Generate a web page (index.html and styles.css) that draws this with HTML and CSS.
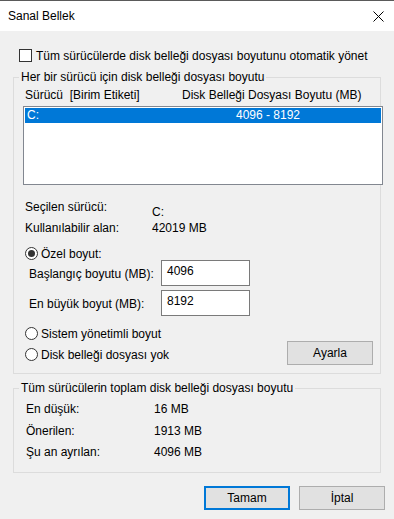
FILE: index.html
```html
<!DOCTYPE html>
<html lang="tr">
<head>
    <meta charset="UTF-8">
    <title>Sanal Bellek</title>
    <link rel="stylesheet" href="styles.css">
</head>
<body>
    <div class="titlebar">
        <span class="title">Sanal Bellek</span>
        <svg class="close" width="11" height="11" viewBox="0 0 11 11">
            <path d="M0.5 0.5 L10.5 10.5 M10.5 0.5 L0.5 10.5" stroke="#000" stroke-width="1" fill="none"/>
        </svg>
    </div>

    <div class="dialog">
        <div class="auto-row">
            <span class="check"></span>
            <span>Tüm sürücülerde disk belleği dosyası boyutunu otomatik yönet</span>
        </div>

        <!-- her sürücü için -->
        <div class="group group-drives">
            <div class="group-title">Her bir sürücü için disk belleği dosyası boyutu</div>
            <div class="list-head">
                <span class="col-drive">Sürücü&nbsp; [Birim Etiketi]</span>
                <span class="col-size">Disk Belleği Dosyası Boyutu (MB)</span>
            </div>
            <div class="listbox">
                <div class="list-row selected">
                    <span class="col-drive">C:</span>
                    <span class="col-size center">4096 - 8192</span>
                </div>
            </div>

            <div class="info-row first">
                <span class="info-label">Seçilen sürücü:</span>
                <span class="info-value low">C:</span>
            </div>
            <div class="info-row">
                <span class="info-label">Kullanılabilir alan:</span>
                <span class="info-value">42019 MB</span>
            </div>

            <div class="radio-row custom">
                <span class="radio checked"></span>
                <span>Özel boyut:</span>
            </div>
            <div class="size-rows">
                <label class="size-row">
                    <span class="size-label">Başlangıç boyutu (MB):</span>
                    <span class="field">4096</span>
                </label>
                <label class="size-row">
                    <span class="size-label">En büyük boyut (MB):</span>
                    <span class="field">8192</span>
                </label>
            </div>

            <div class="bottom-area">
                <div class="radios">
                    <div class="radio-row">
                        <span class="radio"></span>
                        <span>Sistem yönetimli boyut</span>
                    </div>
                    <div class="radio-row">
                        <span class="radio"></span>
                        <span>Disk belleği dosyası yok</span>
                    </div>
                </div>
                <button class="btn set-btn">Ayarla</button>
            </div>
        </div>

        <!-- toplam -->
        <div class="group group-total">
            <div class="group-title">Tüm sürücülerin toplam disk belleği dosyası boyutu</div>
            <div class="total-rows">
                <div class="total-row"><span class="total-label">En düşük:</span><span>16 MB</span></div>
                <div class="total-row"><span class="total-label">Önerilen:</span><span>1913 MB</span></div>
                <div class="total-row"><span class="total-label">Şu an ayrılan:</span><span>4096 MB</span></div>
            </div>
        </div>

        <div class="actions">
            <button class="btn default">Tamam</button>
            <button class="btn">İptal</button>
        </div>
    </div>
</body>
</html>
```

FILE: styles.css
```css
* {
    margin: 0;
    padding: 0;
    box-sizing: border-box;
}

body {
    width: 394px;
    height: 519px;
    overflow: hidden;
    background-color: #f0f0f0;
    color: #000;
    font-family: "Liberation Sans", Arial, sans-serif;
    font-size: 12px;
    line-height: 14px;
}

.titlebar {
    height: 31px;
    border-top: 1px solid #5a5a5a;
    background-color: #fff;
    display: flex;
    align-items: center;
    justify-content: space-between;
    padding: 0 10px 0 8px;
}

.dialog {
    padding: 0 13px;
}

.auto-row {
    margin-top: 18px;
    height: 13px;
    display: flex;
    align-items: center;
    gap: 4px;
    padding-left: 6px;
}

.check {
    width: 13px;
    height: 13px;
    border: 1px solid #333;
    background-color: #fff;
}

.group {
    border: 1px solid #dcdcdc;
}

.group-drives {
    margin-top: 15px;
    padding-bottom: 8px;
}

.group-total {
    margin-top: 14px;
    padding-bottom: 13px;
}

.group-title {
    width: fit-content;
    margin: -8px 0 0 5px;
    padding: 0 2px;
    background-color: #f0f0f0;
}

.list-head {
    margin-top: 4px;
    display: flex;
    padding-left: 11px;
}

.col-drive {
    width: 157px;
    white-space: nowrap;
}

.col-size {
    width: 172px;
    white-space: nowrap;
}

.center {
    text-align: center;
}

.listbox {
    margin: 4px 0 0 9px;
    width: 360px;
    height: 79px;
    border: 1px solid #828790;
    background-color: #fff;
    padding: 1px;
}

.list-row {
    height: 15px;
    line-height: 15px;
    display: flex;
}

.list-row .col-drive {
    padding-left: 2px;
}

.list-row.selected {
    background-color: #0078d7;
    color: #fff;
}

.info-row {
    display: flex;
    align-items: flex-start;
    padding-left: 11px;
    margin-top: 2px;
}

.info-row.first {
    margin-top: 15px;
}

.info-label {
    width: 127px;
}

.info-value.low {
    margin-top: 5px;
}

.radio-row {
    height: 13px;
    display: flex;
    align-items: center;
    gap: 3px;
    padding-left: 11px;
}

.radio-row.custom {
    margin-top: 12px;
}

.radio {
    width: 13px;
    height: 13px;
    border: 1px solid #333;
    border-radius: 50%;
    background-color: #fff;
    display: flex;
    align-items: center;
    justify-content: center;
}

.radio.checked::after {
    content: "";
    width: 7px;
    height: 7px;
    border-radius: 50%;
    background-color: #333;
}

.size-rows {
    display: flex;
    flex-direction: column;
    gap: 4px;
}

.size-row {
    height: 26px;
    display: flex;
    align-items: center;
    padding-left: 15px;
}

.size-label {
    width: 132px;
    padding-top: 1px;
}

.field {
    width: 89px;
    height: 26px;
    border: 1px solid #7a7a7a;
    background-color: #fff;
    padding: 3px 5px;
}

.bottom-area {
    margin-top: 11px;
    display: flex;
    align-items: flex-start;
}

.radios {
    display: flex;
    flex-direction: column;
    gap: 8px;
}

.btn {
    width: 86px;
    height: 24px;
    border: 1px solid #adadad;
    background-color: #e1e1e1;
    font-family: inherit;
    font-size: 12px;
    color: #000;
}

.set-btn {
    margin: 14px 7px 0 auto;
}

.total-rows {
    margin-top: 7px;
    display: flex;
    flex-direction: column;
    gap: 7.5px;
}

.total-row {
    display: flex;
    padding-left: 12px;
}

.total-label {
    width: 128px;
}

.actions {
    margin: 13px -4px 0 0;
    display: flex;
    justify-content: flex-end;
    gap: 9px;
}

.btn.default {
    border: 2px solid #0078d7;
}
```
